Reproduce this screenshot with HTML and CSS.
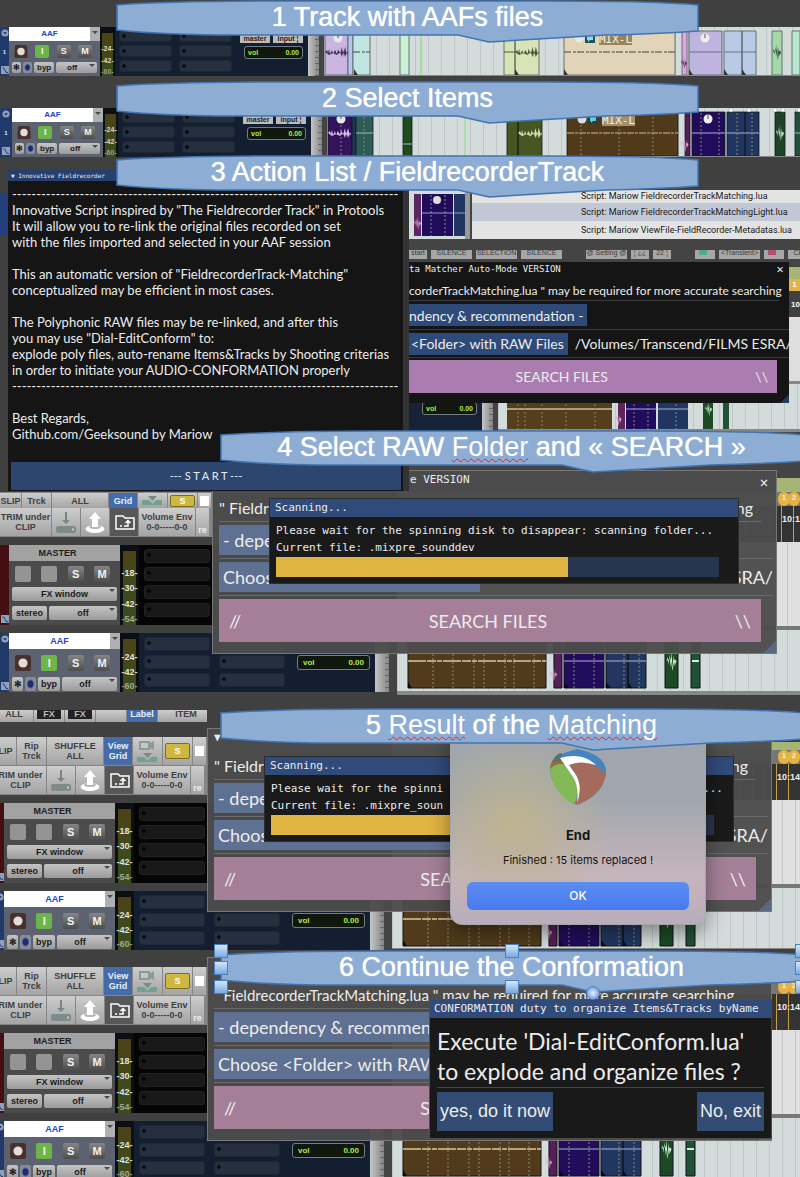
FILE: index.html
```html
<!DOCTYPE html>
<html lang="en">
<head>
<meta charset="utf-8">
<meta name="viewport" content="width=device-width, initial-scale=1">
<title>Fieldrecorder Track workflow</title>
<link rel="stylesheet" href="styles.css">
</head>
<body>
<svg class="defs" aria-hidden="true">
  <symbol id="callout" viewBox="0 0 583 43" preserveAspectRatio="none">
    <path d="M1 5Q55 1 160 1H430Q540 1 582 5V31Q540 34 490 35L373 42L342 35H120Q50 35 1 30Z" fill="#8dadd5" stroke="#4474b0" stroke-width="1.5"/>
  </symbol>
  <symbol id="rec" viewBox="0 0 14 14"><rect width="14" height="14" rx="2" fill="#49302d"/><circle cx="7" cy="7" r="4" fill="#e2dcda"/></symbol>
  <symbol id="chev" viewBox="0 0 10 10"><circle cx="5" cy="5" r="4.5" fill="#8fa0bd"/><path d="M2.500 4H7.500L5 7Z" fill="#1d3260"/></symbol>
  <symbol id="env" viewBox="0 0 9 9"><rect width="9" height="9" fill="#8fa0bd"/><path d="M1.500 2Q4 2 4.500 5T8 7.500" fill="none" stroke="#1d3260"/></symbol>
  <symbol id="wave" viewBox="0 0 24 16"><path d="M0 8L2 6L3 9L4 5L5 10L7 6L8 10L10 6L12 10L13 5L15 10L17 3L18 12L20 3L22 11L23 7V9L22 8L20 13L18 6L17 13L15 8L12 11L8 9L4 11Z"/></symbol>
  <symbol id="blob" viewBox="0 0 10 20"><path d="M0 10L1 6L2 14L3 3L4 17L5 0L6 18L7 4L8 15L10 10L8 8L6 20L4 7Z"/></symbol>
  <symbol id="clips-lg" viewBox="0 0 403 61">
    <g stroke="#10131a" stroke-width="1">
      <path d="M11 0H149V58H11Z" fill="#513b1b"/><path d="M157 0H165V58H157Z" fill="#55205a"/>
      <path d="M167 0H207V58H167Z" fill="#210d5c"/><path d="M209 0H231V58H209ZM231 0H249V58H231Z" fill="#213760"/>
      <path d="M268 0H281V58H268Z" fill="#1d4a24"/><path d="M294 0H303V58H294Z" fill="#215237"/>
    </g>
    <path d="M11 31H149" stroke="#d8c6a8" stroke-width="1.500" stroke-dasharray="18 1 9 1 5 1"/>
    <path d="M167 31H207M209 31H249" stroke="#a8b4dc"/>
    <path d="M11 52L15 58H11ZM167 52L172 58H167ZM209 52L214 58H209ZM231 52L235 58H231Z" fill="#0b0b12"/>
    <path d="M36 0V58M56 0V58M77 0V58M87 0V58M108 0V58M117 0V58M137 0V58M177 0V58M197 0V58M227 0V58M242 0V58" stroke="#8c8577" stroke-dasharray="2 2"/>
    <use href="#blob" x="269" y="21" width="11" height="20" fill="#d5f0d8"/>
    <use href="#blob" x="149" y="37" width="15" height="14" fill="#d9a8cc"/>
    <path d="M295 31H302" stroke="#d5f0d8" stroke-width="2"/>
  </symbol>
  <symbol id="ic-down" viewBox="0 0 28 28"><path d="M13 4H15V12H18L14 16L10 12H13Z" fill="#7d8584"/><rect x="4" y="18" width="20" height="7" rx="2" fill="#7f8b8b"/><path d="M20 21.500H22" stroke="#ccc" stroke-width="2"/></symbol>
  <symbol id="ic-up" viewBox="0 0 28 28"><ellipse cx="14" cy="21" rx="9.500" ry="4" fill="#fff"/><ellipse cx="14" cy="19" rx="6" ry="2" fill="#b8b8b8"/><path d="M14 4L20 11H17V19H11V11H8Z" fill="#fff"/></symbol>
  <symbol id="ic-folder" viewBox="0 0 28 28"><path d="M6 21V8H13L15 10H24V21Z" fill="#555" stroke="#fff" stroke-width="1.500"/><path d="M10 18H12M14 18H18V14M15.500 15L18 12.500L20.500 15" stroke="#fff" stroke-width="1.500" fill="none"/></symbol>
  <symbol id="ic-cam" viewBox="0 0 28 28"><path d="M6 4H17V6L21 4V13L17 11V13H6Z" fill="#8b9b97"/><path d="M8 6H15V11H8Z" fill="#c3c8c6"/><path d="M10 16H19L14.500 21Z" fill="#7b8a86"/><path d="M4 20H11L14.500 24L18 20H24V25H4Z" fill="#6fa28f"/></symbol>
</svg>

<main class="guide">
  <section class="step step-1">
    <h2 class="callout"><svg><use href="#callout"/></svg><span>1 Track with AAFs files</span></h2>
    <div class="track">
      <div class="rail"><svg><use href="#chev"/></svg><span>1</span><svg><use href="#env"/></svg></div>
      <div class="panel">
        <div class="name"><span>AAF</span><i class="drop"></i></div>
        <div class="keys"><button aria-label="Record"><svg><use href="#rec"/></svg></button><button class="on">I</button><button>S</button><button>M</button></div>
        <div class="opts"><button>✻</button><button class="pow" aria-label="Power"></button><button>byp</button><button class="wide">off<i class="drop"></i></button></div>
      </div>
      <div class="meter"><span>-24-</span><span>-42-</span><span>-60-</span></div>
      <div class="rack"><i></i><i></i><i></i></div><div class="rack"><i></i><i></i><i></i></div>
      <div class="send"><div class="route"><span>master</span><span>input ¦</span></div><div class="vol"><span>vol</span><span>0.00</span></div></div>
      <div class="ruler"></div>
      <div class="lane">
        <svg width="477" height="50" viewBox="0 0 477 50">
          <g stroke="#4c5560" stroke-width=".8"><path d="M1 4H24V48H1Z" fill="#ccb4e0"/><path d="M24 4H29V48H24Z" fill="#b6c6e6"/><path d="M29 4H46V48H29Z" fill="#c1e5e1"/><path d="M76 4H85V48H76Z" fill="#c9f2d2"/><path d="M180 4H191V48H180ZM191 4H215V48H191Z" fill="#d8e4b6"/><path d="M240 4H351V48H240Z" fill="#e2d4b9"/><path d="M358 4H363V48H358Z" fill="#dea9dc"/><path d="M365 4H398V48H365Z" fill="#bfb3e0"/><path d="M400 4H418V48H400ZM418 4H432V48H418Z" fill="#b9cae6"/><path d="M448 4H458V48H448Z" fill="#a3d9a8"/><path d="M468 4H476V48H468Z" fill="#b9e8d0"/></g>
          <path d="M97 4V50" stroke="#7be05c"/>
          <path d="M29 25H46M240 25H351" stroke="#444" stroke-dasharray="7 2 3 1"/><path d="M365 25H398M400 25H432" stroke="#68729a"/>
          <use href="#wave" x="1" y="17" width="24" height="16" fill="#3c3458"/><use href="#wave" x="191" y="16" width="25" height="18" fill="#4c5840"/><use href="#blob" x="448" y="17" width="10" height="16" fill="#2c3e33"/><use href="#blob" x="357" y="28" width="6" height="16" fill="#523250"/>
          <path d="M180 25H191" stroke="#4c5840"/>
          <path d="M240 42L244 48H240ZM191 42L195 48H191ZM365 42L369 48H365ZM400 42L404 48H400ZM418 42L422 48H418ZM30 42L34 48H30Z" fill="#333"/>
          <circle cx="14" cy="11" r="4.500" fill="#e8e8e8"/><circle cx="255" cy="11" r="4.500" fill="#e8e8e8"/><circle cx="381" cy="11" r="4.500" fill="#eee"/><path d="M14 7V11M381 7V11" stroke="#555"/>
          <rect x="261" y="6" width="10" height="10" fill="#21555e"/><path d="M263 8H269V13H266L264 15V13H263Z" fill="#8fe0e4"/>
          <rect x="275" y="5" width="33" height="13" fill="#9b8358"/><text class="clip-label" x="275" y="16">MIX-L</text>
        </svg>
      </div>
    </div>
  </section>

  <section class="step step-2">
    <h2 class="callout"><svg><use href="#callout"/></svg><span>2 Select Items</span></h2>
    <div class="track">
      <div class="rail"><svg><use href="#chev"/></svg><span>1</span><svg><use href="#env"/></svg></div>
      <div class="panel">
        <div class="name"><span>AAF</span><i class="drop"></i></div>
        <div class="keys"><button aria-label="Record"><svg><use href="#rec"/></svg></button><button class="on">I</button><button>S</button><button>M</button></div>
        <div class="opts"><button>✻</button><button class="pow" aria-label="Power"></button><button>byp</button><button class="wide">off<i class="drop"></i></button></div>
      </div>
      <div class="meter"><span>-24-</span><span>-42-</span><span>-60-</span></div>
      <div class="rack"><i></i><i></i><i></i></div><div class="rack"><i></i><i></i><i></i></div>
      <div class="send"><div class="route"><span>master</span><span>input ¦</span></div><div class="vol"><span>vol</span><span>0.00</span></div></div>
      <div class="ruler"></div>
      <div class="lane">
        <svg width="477" height="50" viewBox="0 0 477 50">
          <g stroke="#14161c" stroke-width=".8"><path d="M1 4H25V48H1Z" fill="#32135c"/><path d="M25 4H29V48H25Z" fill="#1f3560"/><path d="M29 4H46V48H29Z" fill="#2d5b55"/><path d="M76 4H85V48H76Z" fill="#1e4c1d"/><path d="M180 4H191V48H180ZM191 4H215V48H191Z" fill="#455620"/><path d="M240 4H351V48H240Z" fill="#513a1a"/><path d="M358 4H363V48H358Z" fill="#551c56"/><path d="M365 4H398V48H365Z" fill="#210c5c"/><path d="M400 4H418V48H400ZM418 4H432V48H418Z" fill="#203560"/><path d="M448 4H458V48H448Z" fill="#1d4426"/><path d="M468 4H476V48H468Z" fill="#205037"/></g>
          <path d="M138 4V50" stroke="#8fdf80"/>
          <path d="M240 25H351" stroke="#cdb898" stroke-dasharray="7 1 3 1"/><path d="M29 25H46M76 36H85M365 25H398M400 25H432M468 25H476" stroke="#aab4d0"/>
          <path d="M254 5V48M292 5V48M326 5V48M14 5V48M37 5V48M374 5V48M392 5V48M410 5V48M425 5V48" stroke="#8c8577" stroke-dasharray="2 2"/>
          <use href="#wave" x="1" y="17" width="24" height="16" fill="#dac4ef"/><use href="#wave" x="191" y="16" width="25" height="18" fill="#d3dcae"/><use href="#blob" x="448" y="17" width="10" height="16" fill="#cfeedd"/><use href="#blob" x="351" y="28" width="13" height="16" fill="#d5a6d5"/>
          <circle cx="14" cy="11" r="4.500" fill="#e8e8e8"/><circle cx="255" cy="11" r="4.500" fill="#ddd"/><circle cx="381" cy="11" r="4.500" fill="#eee"/><path d="M14 7V11M381 7V11" stroke="#555"/>
          <g fill="#fff" stroke="#999" stroke-width=".5"><circle cx="404" cy="2" r="2"/><circle cx="422" cy="2" r="2"/><circle cx="448" cy="2" r="2"/><circle cx="456" cy="2" r="2"/><circle cx="472" cy="2" r="2"/></g>
          <rect x="261" y="6" width="10" height="10" fill="#1b4750"/><path d="M263 8H269V13H266L264 15V13H263Z" fill="#66cfd5"/>
          <rect x="275" y="5" width="33" height="13" fill="#a58f66"/><text class="clip-label" x="275" y="16">MIX-L</text>
        </svg>
      </div>
    </div>
  </section>

  <section class="step step-3">
    <h2 class="callout"><svg><use href="#callout"/></svg><span>3 Action List / FieldrecorderTrack</span></h2>

    <div class="backdrop">
      <div class="actions">
        <svg width="61" height="49" viewBox="0 0 61 49"><rect width="61" height="49" fill="#d4dbdb"/><rect x="5" y="4" width="7" height="42" fill="#5a2560"/><rect x="13" y="4" width="31" height="42" fill="#210c5c"/><rect x="45" y="4" width="11" height="42" fill="#203560"/><rect x="56" width="5" height="49" fill="#999"/><path d="M13 23H44M45 23H56" stroke="#929cc8"/><path d="M22 5V46M36 5V46" stroke="#888" stroke-dasharray="2 2"/><circle cx="28" cy="10" r="4" fill="#ddd"/><use href="#blob" x="5" y="26" width="7" height="14" fill="#d9a8d9"/></svg>
        <ul class="list"><li>Script: Mariow FieldrecorderTrackMatching.lua</li><li>Script: Mariow FieldrecorderTrackMatchingLight.lua</li><li>Script: Mariow ViewFile-FieldRecorder-Metadatas.lua</li></ul>
      </div>
      <div class="minibar"><span>start</span><span>SILENCE</span><span>SELECTION</span><span>SILENCE</span><span class="gap">@ Setting @</span><span>¦ ¿¿</span><span>22 ¦</span><span class="gap"><i class="dot teal"></i></span><span>&lt;Transient&gt;</span><span><i class="dot rose"></i></span><span>CL</span></div>
      <div class="side"><b class="green"></b><b class="mark">1</b><span>10</span></div>
      <div class="peek"><div class="vol"><span>vol</span><span>0.00</span></div><div class="ruler"></div>
        <div class="lane"><svg width="302" height="48" viewBox="0 0 302 48"><rect x="9" width="105" height="48" fill="#553e1b"/><rect x="120" width="7" height="48" fill="#60245c"/><rect x="128" width="30" height="48" fill="#210c5c"/><rect x="160" width="30" height="48" fill="#203560"/><rect x="205" width="10" height="48" fill="#1d4a24"/><rect x="225" width="6" height="48" fill="#215237"/><path d="M9 25H114" stroke="#cfb9a0" stroke-width="1.500"/><path d="M128 25H158M160 25H190" stroke="#a5afd5"/><path d="M20 0V48M27 0V48M44 0V48M68 0V48M97 0V48M136 0V48M150 0V48M178 0V48" stroke="#8c8577" stroke-dasharray="2 2"/><use href="#blob" x="206" y="18" width="9" height="14" fill="#d5f0d8"/><use href="#blob" x="114" y="28" width="12" height="14" fill="#d9a8cc"/></svg></div>
      </div>
      <div class="cap"></div>
    </div>

    <article class="window matcher">
      <header><h3>ta Matcher Auto-Mode VERSION</h3><button class="close" aria-label="Close">✕</button></header>
      <p>corderTrackMatching.lua " may be required for more accurate searching</p>
      <div class="row"><button class="blue">ndency &amp; recommendation -</button></div>
      <div class="row"><button class="blue">&lt;Folder&gt; with RAW Files</button><span>/Volumes/Transcend/FILMS ESRA/</span></div>
      <button class="search"><span></span><span>SEARCH FILES</span><span>\\</span></button>
    </article>

    <article class="window intro">
      <header><h3>▼ Innovative Fieldrecorder</h3></header>
      <div class="copy">
        <p class="dash">--------------------------------------------------------------------------------</p>
        <p>Innovative Script inspired by "The Fieldrecorder Track" in Protools<br>It will allow you to re-link the original files recorded on set<br>with the files imported and selected in your AAF session</p>
        <p class="para">This an automatic version of "FieldrecorderTrack-Matching"<br>conceptualized may be efficient in most cases.</p>
        <p class="para">The Polyphonic RAW files may be re-linked, and after this<br>you may use "Dial-EditConform" to:<br>explode poly files, auto-rename Items&amp;Tracks by Shooting criterias<br>in order to initiate your AUDIO-CONFORMATION properly</p>
        <p class="dash">--------------------------------------------------------------------------------</p>
        <p class="para">Best Regards,<br>Github.com/Geeksound by Mariow</p>
      </div>
      <button class="start">--- S T A R T ---</button>
    </article>
  </section>

  <section class="step step-4">
    <h2 class="callout"><svg><use href="#callout"/></svg><span>4 Select RAW <u>Folder</u> and « SEARCH »</span></h2>
    <div class="session">
      <div class="mixer">
        <div class="bar cut"><button class="b1">SLIP</button><button class="b2">Trck</button><button class="b3">ALL</button><button class="b4 view">Grid</button><button class="b5" aria-label="Camera"><svg><use href="#ic-cam"/></svg></button><button class="b6"><b class="solo">S</b></button><button class="b7" aria-label="Item"><i class="sheet"></i></button></div>
        <div class="bar"><button class="c1">TRIM under<br>CLIP</button><button class="c2" aria-label="Import"><svg><use href="#ic-down"/></svg></button><button class="c2" aria-label="Export"><svg><use href="#ic-up"/></svg></button><button class="c2 dark" aria-label="Folder"><svg><use href="#ic-folder"/></svg></button><button class="c3">Volume Env<br>0-0-----0-0</button><button class="c4">re</button></div>
        <div class="track big master">
          <div class="rail"><span></span><span></span><svg><use href="#env"/></svg></div>
          <div class="panel"><div class="name"><span>MASTER</span></div>
            <div class="keys"><button aria-label="Slot 1"></button><button aria-label="Slot 2"></button><button>S</button><button>M</button></div>
            <div class="opts"><button class="wide">FX window<i class="drop"></i></button></div>
            <div class="opts"><button>stereo</button><button class="wide">off<i class="drop"></i></button></div></div>
          <div class="meter"><span>-18-</span><span>-30-</span><span>-42-</span><span>-54-</span></div>
          <div class="rack"><i></i><i></i><i></i><i></i></div>
        </div>
        <div class="track big">
          <div class="rail"><svg><use href="#chev"/></svg><span></span><svg><use href="#env"/></svg></div>
          <div class="panel"><div class="name"><span>AAF</span><i class="drop"></i></div>
            <div class="keys"><button aria-label="Record"><svg><use href="#rec"/></svg></button><button class="on">I</button><button>S</button><button>M</button></div>
            <div class="opts"><button>✻</button><button class="pow" aria-label="Power"></button><button>byp</button><button class="wide">off<i class="drop"></i></button></div></div>
          <div class="meter"><span>-24-</span><span>-42-</span><span>-60-</span></div>
          <div class="rack"><i></i><i></i><i></i></div><div class="rack"><i></i><i></i><i></i></div>
          <div class="send"><div class="vol"><span>vol</span><span>0.00</span></div></div>
          <div class="ruler"></div>
        </div>
      </div>
      <div class="arrange">
        <div class="marks"><b>1</b><b>2</b></div><div class="time">10:1</div>
        <div class="lane empty"></div><div class="lane"><svg width="403" height="61"><use href="#clips-lg"/></svg></div>
      </div>
    </div>
    <article class="window ghost">
      <header><h3>e VERSION</h3><button class="close" aria-label="Close">✕</button></header>
      <p><span>" Fieldr</span><span>ing</span></p>
      <div class="row"><button class="blue">- depe</button></div>
      <div class="row"><button class="blue">Choos</button><span>SRA/</span></div>
      <button class="search"><span>//</span><span>SEARCH FILES</span><span>\\</span></button>
    </article>
    <article class="window scan">
      <header><h3>Scanning...</h3></header>
      <p>Please wait for the spinning disk to disappear: scanning folder...<br>Current file: .mixpre_sounddev</p>
      <div class="progress"><i></i></div>
    </article>
  </section>

  <section class="step step-5">
    <h2 class="callout"><svg><use href="#callout"/></svg><span>5 <u>Result</u> of the <u>Matching</u></span></h2>
    <div class="session">
      <div class="mixer">
        <div class="bar sliver"><button class="d1">ALL</button><button class="d2"><b>FX</b></button><button class="d2"><b>FX</b></button><button class="d2" aria-label="Blank"></button><button class="d2 view">Label</button><button class="d3">ITEM</button></div>
        <div class="bar"><button class="b1">LIP</button><button class="b2">Rip<br>Trck</button><button class="b3">SHUFFLE<br>ALL</button><button class="b4 view">View<br>Grid</button><button class="b5" aria-label="Camera"><svg><use href="#ic-cam"/></svg></button><button class="b6"><b class="solo">S</b></button><button class="b7" aria-label="Item"><i class="sheet"></i></button></div>
        <div class="bar"><button class="c1">RIM under<br>CLIP</button><button class="c2" aria-label="Import"><svg><use href="#ic-down"/></svg></button><button class="c2" aria-label="Export"><svg><use href="#ic-up"/></svg></button><button class="c2 dark" aria-label="Folder"><svg><use href="#ic-folder"/></svg></button><button class="c3">Volume Env<br>0-0-----0-0</button><button class="c4">re</button></div>
        <div class="track big master">
          <div class="rail"><span></span><span></span><svg><use href="#env"/></svg></div>
          <div class="panel"><div class="name"><span>MASTER</span></div>
            <div class="keys"><button aria-label="Slot 1"></button><button aria-label="Slot 2"></button><button>S</button><button>M</button></div>
            <div class="opts"><button class="wide">FX window<i class="drop"></i></button></div>
            <div class="opts"><button>stereo</button><button class="wide">off<i class="drop"></i></button></div></div>
          <div class="meter"><span>-18-</span><span>-30-</span><span>-42-</span><span>-54-</span></div>
          <div class="rack"><i></i><i></i><i></i><i></i></div>
        </div>
        <div class="track big">
          <div class="rail"><svg><use href="#chev"/></svg><span></span><svg><use href="#env"/></svg></div>
          <div class="panel"><div class="name"><span>AAF</span><i class="drop"></i></div>
            <div class="keys"><button aria-label="Record"><svg><use href="#rec"/></svg></button><button class="on">I</button><button>S</button><button>M</button></div>
            <div class="opts"><button>✻</button><button class="pow" aria-label="Power"></button><button>byp</button><button class="wide">off<i class="drop"></i></button></div></div>
          <div class="meter"><span>-24-</span><span>-42-</span><span>-60-</span></div>
          <div class="rack"><i></i><i></i><i></i></div><div class="rack"><i></i><i></i><i></i></div>
          <div class="send"><div class="vol"><span>vol</span><span>0.00</span></div></div>
          <div class="ruler"></div>
        </div>
      </div>
      <div class="arrange">
        <div class="region"></div><div class="marks"><b>1</b><b>2</b></div><div class="time">10:14</div>
        <div class="lane empty"></div><div class="lane"><svg width="403" height="61"><use href="#clips-lg"/></svg></div>
      </div>
    </div>
    <article class="window ghost">
      <header><h3>▼</h3></header>
      <p><span>" Fieldr</span><span>ing</span></p>
      <div class="row"><button class="blue">- depe</button></div>
      <div class="row"><button class="blue">Choos</button><span>SRA/</span></div>
      <button class="search"><span>//</span><span class="part">SEA</span><span>\\</span></button>
    </article>
    <article class="window scan">
      <header><h3>Scanning...</h3></header>
      <p><span>Please wait for the spinni</span><span>...</span></p>
      <p>Current file: .mixpre_soun</p>
      <div class="progress"><i></i></div>
    </article>
    <article class="alert" role="dialog" aria-label="End">
      <svg width="58" height="64" viewBox="0 0 58 64">
        <path d="M1 22Q3 10 28 4Q54 9 57 24Q57 48 30 59Q24 61 18 54Q1 40 1 22Z" fill="#4585be"/>
        <path d="M1 22Q5 13 14 15L25 32Q31 42 26 59Q20 58 13 50Q1 38 1 22Z" fill="#83b957"/>
        <path d="M2 19Q6 10 11 12L16 20Q8 17 1 24Z" fill="#986b3e"/>
        <path d="M3 17Q7 8 13 8L12 16Z" fill="#5e6f70"/>
        <path d="M20 19Q41 12 57 29Q54 49 30 59Q28 61 26 58Q34 42 27 30Z" fill="#a46b5c"/>
        <path d="M11 13Q34 7 47 20Q31 15 20 20L27 30Q34 42 28 58Q30 41 24 32Z" fill="#fff"/>
      </svg>
      <h3>End</h3><p>Finished : 15 items replaced !</p><button>OK</button>
    </article>
  </section>

  <section class="step step-6">
    <h2 class="callout"><svg><use href="#callout"/></svg><span>6 Continue the Conformation</span>
      <i class="grip tl"></i><i class="grip ml"></i><i class="grip bl"></i><i class="grip tc"></i><i class="grip bc"></i><i class="grip tr"></i><i class="grip mr"></i><i class="grip br"></i><i class="grip knob"></i></h2>
    <div class="session">
      <div class="mixer">
        <div class="bar"><button class="b1">LIP</button><button class="b2">Rip<br>Trck</button><button class="b3">SHUFFLE<br>ALL</button><button class="b4 view">View<br>Grid</button><button class="b5" aria-label="Camera"><svg><use href="#ic-cam"/></svg></button><button class="b6"><b class="solo">S</b></button><button class="b7" aria-label="Item"><i class="sheet"></i></button></div>
        <div class="bar"><button class="c1">RIM under<br>CLIP</button><button class="c2" aria-label="Import"><svg><use href="#ic-down"/></svg></button><button class="c2" aria-label="Export"><svg><use href="#ic-up"/></svg></button><button class="c2 dark" aria-label="Folder"><svg><use href="#ic-folder"/></svg></button><button class="c3">Volume Env<br>0-0-----0-0</button><button class="c4">re</button></div>
        <div class="track big master">
          <div class="rail"><span></span><span></span><svg><use href="#env"/></svg></div>
          <div class="panel"><div class="name"><span>MASTER</span></div>
            <div class="keys"><button aria-label="Slot 1"></button><button aria-label="Slot 2"></button><button>S</button><button>M</button></div>
            <div class="opts"><button class="wide">FX window<i class="drop"></i></button></div>
            <div class="opts"><button>stereo</button><button class="wide">off<i class="drop"></i></button></div></div>
          <div class="meter"><span>-18-</span><span>-30-</span><span>-42-</span><span>-54-</span></div>
          <div class="rack"><i></i><i></i><i></i><i></i></div>
        </div>
        <div class="track big">
          <div class="rail"><svg><use href="#chev"/></svg><span></span><svg><use href="#env"/></svg></div>
          <div class="panel"><div class="name"><span>AAF</span><i class="drop"></i></div>
            <div class="keys"><button aria-label="Record"><svg><use href="#rec"/></svg></button><button class="on">I</button><button>S</button><button>M</button></div>
            <div class="opts"><button>✻</button><button class="pow" aria-label="Power"></button><button>byp</button><button class="wide">off<i class="drop"></i></button></div></div>
          <div class="meter"><span>-24-</span><span>-42-</span><span>-60-</span></div>
          <div class="rack"><i></i><i></i><i></i></div><div class="rack"><i></i><i></i><i></i></div>
          <div class="send"><div class="vol"><span>vol</span><span>0.00</span></div></div>
          <div class="ruler"></div>
        </div>
      </div>
      <div class="arrange">
        <div class="marks"><b>1</b><b>2</b></div><div class="time">10:14</div>
        <div class="lane empty"></div><div class="lane"><svg width="403" height="61"><use href="#clips-lg"/></svg></div>
      </div>
    </div>
    <article class="window ghost">
      <header></header>
      <p class="long">" FieldrecorderTrackMatching.lua " may be required for more accurate searching</p>
      <div class="row"><button class="blue">- dependency &amp; recommen</button></div>
      <div class="row"><button class="blue">Choose &lt;Folder&gt; with RAW</button></div>
      <button class="search"><span>//</span><span class="part">S</span><span></span></button>
    </article>
    <article class="window confirm">
      <header><h3>CONFORMATION duty to organize Items&amp;Tracks byName</h3></header>
      <p>Execute 'Dial-EditConform.lua'<br>to explode and organize files ?</p>
      <div class="choices"><button>yes, do it now</button><button>No, exit</button></div>
    </article>
  </section>
</main>
</body>
</html>
```
FILE: styles.css
```css
* { box-sizing: border-box; }
body { margin: 0; background: #404040; font-family: "Liberation Sans", Arial, sans-serif; }
h2, h3, p, ul { margin: 0; padding: 0; font-weight: normal; }
h3 { font-size: inherit; }
button { margin: 0; padding: 0; border: 0; font: inherit; color: inherit; white-space: nowrap; }
i { font-style: normal; }
.defs { display: block; width: 0; height: 0; }

.guide {
  --hand: Lato, "Open Sans", sans-serif;
  --mono: "DejaVu Sans Mono", "Liberation Mono", monospace;
  position: relative;
  overflow: hidden;
}
.step { position: relative; }

/* Callouts */
.callout {
  position: absolute;
  z-index: 5;
  left: 116px;
  width: 583px;
  height: 43px;
  color: #fff;
  font-size: 27px;
  line-height: 34px;
  text-align: center;
  text-shadow: 0 0 1px #fff;
}
.callout > svg { position: absolute; inset: 0; width: 100%; height: 100%; }
.callout span { position: relative; white-space: nowrap; }
.callout u { text-decoration: underline wavy #f01c20 1px; text-underline-offset: 2px; text-decoration-skip-ink: none; text-shadow: none; }
.step-1 .callout { top: 0; }
.step-2 .callout { top: 2px; }
.step-3 .callout { top: -3px; }
.step-4 .callout { top: -62px; left: 220px; }
.step-5 .callout { top: 2px; left: 220px; }
.step-6 .callout { top: 0; left: 220px; }

.grip { position: absolute; width: 14px; height: 14px; background: linear-gradient(#d4e7fb, #78aae4); border: 1px solid #4a7fc4; }
.tl, .tc, .tr { top: -6px; }
.ml, .mr { top: 11px; }
.bl, .bc, .br { top: 30px; }
.tl, .ml, .bl { left: -6px; }
.tc, .bc { left: 285px; }
.tr, .mr, .br { right: -6px; }
.knob { top: 36px; left: 366px; border-radius: 50%; background: radial-gradient(#e8f1ff, #4f83d8); }

/* Track rows */
.step-1 { padding: 27px 0 3px; }
.step-2 { padding: 29px 0 1px; }
.step-2 .rail { width: 12px; }
.track { display: flex; height: 49px; background: #141e31; font-size: 8px; font-weight: bold; }
.rail { display: flex; flex: none; flex-direction: column; justify-content: space-between; align-items: center; width: 9px; padding: 2px 0; background: #21396b; color: #dfe6f2; font-size: 6px; overflow: hidden; }
.rail svg { width: 8px; height: 8px; }
.panel { display: flex; flex: none; flex-direction: column; gap: 4px; width: 91px; background: #5c6270; color: #1b1b1b; }
.name { display: flex; height: 14px; line-height: 14px; background: #fff; color: #1d45dd; text-align: center; }
.name span { flex: 1; }
.name .drop { position: static; width: 10px; background: #aeb0b4; }
.drop::before { content: ""; display: block; width: 0; margin: 4px auto 0; border: 3px solid transparent; border-top-color: #4a4a4a; border-bottom: 0; }
.keys { display: flex; justify-content: space-between; padding: 0 8px 0 5px; }
.keys button { width: 14px; height: 13px; border-radius: 2px; background: linear-gradient(#858585, #4d4d4d); color: #f2f2f2; font-size: 9px; line-height: 13px; }
.keys svg { display: block; width: 100%; height: 100%; }
.keys .on { background: #6db44b; }
.opts { display: flex; gap: 2px; padding: 0 3px; }
.opts button { position: relative; min-width: 9px; height: 11px; padding: 0 3px; border-radius: 2px; background: linear-gradient(#c4c4c4, #9b9b9b); line-height: 10px; }
.opts button:first-child { padding: 0 1px; }
.opts .pow { background: radial-gradient(#1c2c78 30%, #888c98 50%); }
.opts .wide { flex: 1; padding-right: 12px; }
.opts .drop { position: absolute; top: -2px; right: 2px; }
.meter { display: flex; flex: none; flex-direction: column; justify-content: space-between; align-items: center; width: 15px; padding-top: 12px; background: linear-gradient(#4d4217, #3d4b1c 70%); border: solid #0b0f14; border-width: 6px 2px 0; color: #d6d6d2; font-size: 7px; line-height: 8px; white-space: nowrap; }
.meter span:last-child { opacity: .6; }
.rack { display: flex; flex: none; flex-direction: column; gap: 3px; width: 60px; padding: 3px 3px 0 4px; }
.rack i { height: 12px; border-radius: 3px; background: radial-gradient(circle at 4px 5px, #0a0f17 2px, #252f3e 2px); border: 1px solid #1d2633; }
.send { flex: 1; max-width: 73px; padding: 8px 5px 0 5px; }
.route { display: flex; gap: 3px; font-size: 7px; line-height: 7px; height: 8px; overflow: hidden; text-align: center; }
.route span { flex: 1; background: #bbb; color: #222; }
.vol { display: flex; justify-content: space-between; align-items: center; height: 13px; margin: 3px 0 0 4px; padding: 0 3px; border: 1px solid #727d84; border-radius: 3px; background: #10180e; color: #b3ea4c; font-size: 7px; font-weight: bold; }
.ruler { flex: none; width: 16px; border-right: 5px solid #444; background: repeating-linear-gradient(#666 0 1px, transparent 1px 6px) right / 4px 100% no-repeat, linear-gradient(90deg, #c6c6c6, #858585); }
.lane { flex: 1; overflow: hidden; background: repeating-linear-gradient(90deg, #bfc6c6 0 1px, transparent 1px 13px), #d4dbdb; border-bottom: 1px solid #888; }
.lane svg { display: block; }
.clip-label { font: 11px "DejaVu Sans Mono", monospace; fill: #f4efe2; }

/* Large session view */
.session { display: flex; }
.mixer { flex: none; width: 397px; }
.step-5 .mixer, .step-6 .mixer { margin-left: -5px; }
.big { width: 397px; height: 59px; margin-top: 8px; font-size: 9px; }
.big.master { height: 80px; background: #050505; }
.big .panel { width: 111px; gap: 6px; }
.big .name { height: 16px; line-height: 16px; }
.big .keys { padding: 0 10px 0 6px; }
.big .keys button { width: 16px; height: 16px; font-size: 11px; line-height: 16px; }
.big .opts button { height: 14px; min-width: 11px; line-height: 13px; }
.big .meter { width: 19px; border-width: 6px 3px 0; font-size: 9px; line-height: 12px; color: #e0e0dc; }
.big .rack { width: 75px; gap: 4px; padding: 4px 4px 0 5px; }
.big .rack i { height: 14px; }
.big .send { max-width: 86px; padding: 19px 5px 0 4px; }
.big .vol { height: 15px; padding: 0 5px; font-size: 8px; }
.big .ruler { width: 22px; border-right-width: 8px; }
.master .rail { background: #430f12; }
.master .panel { gap: 5px; background: #4b4b4b; }
.master .name { background: #a2a2a2; color: #1d1d1d; }
.master .name span { padding-right: 14px; }
.master .keys button:nth-child(-n+2) { background: #949494; }
.master .opts button { padding: 0 4px; }
.master .meter { padding-top: 16px; }
.master .rack i { background: radial-gradient(circle at 4px 5px, #050505 2px, #181818 2px); border-color: #222; }

.bar { display: flex; gap: 1px; width: 212px; height: 29px; overflow: hidden; background: #858585; font-size: 9px; font-weight: bold; line-height: 10px; color: #3f3f3f; }
.bar button { flex: none; height: 28px; background: linear-gradient(#cdcdcd, #a4a4a4); text-align: center; }
.bar svg { display: block; width: 28px; height: 28px; }
.bar .view { background: #456ca8; color: #e8efff; }
.bar .dark { background: #575757; }
.b1 { width: 21px; }
.b2, .b5 { width: 29px; }
.b3 { width: 56px; }
.b4 { width: 28px; }
.b6 { width: 29px; }
.b7, .c4 { width: 13px; overflow: hidden; }
.c1 { width: 51px; }
.c2 { width: 28px; }
.c3 { width: 56px; }
.bar .c4 { color: #eee; padding-top: 15px; }
.solo { display: block; margin: 0 2px; border: 1px solid #7c6c20; border-radius: 2px; background: #ceb840; color: #fff; line-height: 14px; }
.sheet { display: block; height: 10px; margin: 3px 2px; background: #fff; }
.cut { height: 16px; align-items: flex-end; }
.cut button { height: 15px; }
.cut svg { margin-top: -13px; }
.cut .solo { line-height: 10px; }
.sliver { height: 12px; margin: 4px 0 15px; }
.sliver button { height: 12px; line-height: 6px; padding-bottom: 5px; }
.sliver b { display: block; margin: 0 3px; background: #222; color: #bbb; line-height: 9px; }
.d1 { width: 38px; }
.d2 { width: 30px; }
.d3 { width: 56px; }

.arrange { display: flex; flex: 1; flex-direction: column; min-width: 0; color: #eee; }
.region { height: 8px; margin-top: 36px; background: #a5b573; }
.marks { display: flex; justify-content: flex-end; height: 14px; background: #777; font-size: 8px; line-height: 12px; }
.marks b { width: 12px; margin-right: -2px; border-radius: 6px; background: #e5b247; text-align: center; }
.marks b:last-child { margin-right: 0; }
.time { height: 36px; padding: 8px 0; background: repeating-linear-gradient(90deg, #c99b45 0 1px, transparent 1px 12px), #333; font-size: 9px; font-weight: bold; text-align: right; }
.arrange .lane { flex: none; height: 61px; }
.arrange .empty { height: 88px; background-color: #e0e0e0; border-bottom: 4px solid #777; }
.step-4 .lane:last-child { height: 65px; border-bottom: 4px solid #888; }
.step-4 .session { padding-bottom: 11px; }
.step-6 .session { padding-top: 17px; }
.step-6 .bar:first-child { margin: 0; }
.step-6 .marks { margin-top: 13px; }

/* Script windows */
.window { position: absolute; z-index: 2; background: #151515; color: #ececec; }
.window header { display: flex; justify-content: space-between; font-family: var(--mono); }
.close { background: none; }
.blue { padding: 0 4px; background: #2e4a79; text-align: left; }
.search { display: flex; justify-content: space-between; align-items: center; background: #ab7cb0; }

.step-3 { min-height: 334px; display: flex; }
.step-3::before { content: ""; align-self: flex-start; width: 8px; height: 43px; margin-top: 35px; background: #23407c; }
.intro { z-index: 4; top: 12px; left: 8px; width: 401px; border-right: 6px solid #333; font-size: 13px; line-height: 16px; font-family: var(--hand); white-space: nowrap; }
.intro header { height: 11px; padding-left: 3px; background: #25406f; font-size: 6px; line-height: 11px; }
.intro .copy { padding: 5px 4px 20px; }
.intro .para { margin-top: 16px; }
.start { display: block; width: 390px; height: 28px; margin: 0 3px 1px; background: #2d466f; font-size: 11px; }

.backdrop { flex: 1; margin: 32px 0 0 401px; min-width: 0; background: #444; }
.actions { display: flex; height: 49px; }
.list { flex: 1; list-style: none; overflow: hidden; background: #e3e3e3; color: #191919; font: 9px/18px Roboto, sans-serif; white-space: nowrap; margin-left: 2px; }
.list li { padding-left: 109px; }
.list li:first-child { line-height: 13px; }
.list li:nth-child(2) { background: #c2c7d6; }
.minibar { display: flex; gap: 4px; height: 9px; margin-top: 11px; overflow: hidden; color: #3c3c3c; font-size: 7px; line-height: 6px; text-align: center; white-space: nowrap; }
.minibar span { flex: none; min-width: 41px; background: #a6a6a6; }
.minibar .gap { margin-left: 20px; }
.minibar span:first-child, .minibar span:nth-child(6), .minibar span:nth-child(7) { min-width: 18px; }
.dot { display: block; width: 8px; height: 5px; margin-left: 4px; background: #52a88d; }
.dot.rose { background: #b25073; }
.minibar span:nth-child(8), .minibar span:nth-child(10), .minibar span:last-child { min-width: 20px; }
.side { display: flex; flex-direction: column; align-items: flex-end; height: 117px; margin-top: 8px; background: linear-gradient(#404040 50px, #dedede 50px 114px, #888 114px); color: #fff; font-size: 8px; }
.side b { width: 11px; height: 12px; line-height: 12px; }
.green, .cap { background: #a5b573; }
.mark { background: #e5b247; text-align: center; }
.side span { margin-top: 9px; font-weight: bold; }
.peek { display: flex; height: 48px; background: #172236; }
.peek .vol { width: 55px; margin: 18px 5px 0 13px; }
.peek .lane { border-bottom-width: 3px; }
.cap { height: 14px; margin: 46px 0 0 368px; }

.matcher { top: 104px; left: 409px; width: 380px; height: 141px; padding-right: 10px; font-family: var(--hand); font-size: 14px; white-space: nowrap; background: linear-gradient(135deg, transparent 50%, #263b60 50%) right bottom / 8px 8px no-repeat, #151515; }
.matcher header { height: 15px; margin-right: -8px; font-size: 9px; line-height: 15px; }
.matcher .close { width: 14px; font-size: 12px; }
.matcher p { height: 24px; font-size: 12px; line-height: 28px; border-bottom: 1px solid #3a3a3a; }
.matcher .row { display: flex; align-items: center; gap: 7px; height: 28px; border-bottom: 1px solid #3a3a3a; margin-right: -10px; }
.matcher .row:nth-of-type(1) { height: 29px; }
.matcher .blue { height: 22px; padding-left: 0; }
.matcher .row + .row .blue { padding-left: 2px; }
.matcher .search { width: 418px; height: 33px; margin: 2px 0 0 -50px; padding: 0 9px; }

.ghost { top: -22px; left: 212px; width: 565px; height: 184px; padding: 1px 15px 0 6px; border: 1px solid #777; background: linear-gradient(135deg, transparent 50%, #5a6882 50%) right bottom / 12px 12px no-repeat, rgb(76 76 76 / .96); font-family: var(--hand); font-size: 18px; white-space: nowrap; }
.step-5 .ghost { top: 22px; left: 207px; }
.step-6 .ghost { top: 7px; left: 207px; }
.ghost header { height: 20px; margin-right: -12px; font-size: 11px; line-height: 16px; }
.step-4 .ghost h3 { padding-left: 191px; }
.ghost .close { width: 18px; font-size: 14px; }
.ghost p { display: flex; justify-content: space-between; padding-right: 8px; height: 30px; font-size: 16px; line-height: 32px; border-bottom: 1px solid #6b6b6b; }
.ghost .long { font-size: 15px; }
.ghost .row { display: flex; align-items: center; justify-content: space-between; height: 37px; margin-right: -12px; border-bottom: 1px solid #6b6b6b; }
.ghost .blue { width: 261px; height: 30px; background: #5f7192; }
.ghost .search { width: 100%; height: 43px; margin-top: 3px; padding: 0 10px; background: #a47f97; }
.ghost .part { width: 120px; margin-right: auto; margin-left: 184px; text-align: left; }

.scan { top: 6px; left: 269px; width: 470px; height: 86px; padding-bottom: 6px; background: #1a1a1a; border: 1px solid #2d2d2d; font: 11px/17px var(--mono); white-space: nowrap; }
.step-5 .scan { top: 50px; left: 264px; }
.scan header, .confirm header { height: 18px; padding-left: 5px; background: #304a79; line-height: 17px; }
.scan header + p { padding-top: 5px; }
.scan p { display: block; padding: 0 10px 0 6px; }
.step-5 .scan p { display: flex; justify-content: space-between; }
.progress { height: 20px; margin: 1px 19px 0 6px; background: #27354f; }
.progress i { display: block; width: 66%; height: 100%; background: #dfb440; }

.alert { position: absolute; z-index: 3; top: 20px; left: 450px; width: 256px; padding: 18px 16px 14px; border: 1px solid #a5a5a5; border-radius: 12px; background: radial-gradient(circle at 25% 50%, #bfb48f, transparent 45%), linear-gradient(#9fa6ad 35%, #c6b5bc 75%, #b9adbc); box-shadow: 0 8px 20px rgb(0 0 0 / .4); color: #141414; font: 11px/16px Inter, sans-serif; text-align: center; }
.alert svg { display: block; margin: 0 auto; }
.alert h3 { margin-top: 17px; font-size: 13px; font-weight: bold; line-height: 18px; }
.alert p { margin: 8px 0 14px; }
.alert button { width: 100%; height: 28px; border-radius: 6px; background: linear-gradient(#5c8df2, #477aee); color: #fff; font-size: 12px; font-weight: 500; }

.confirm { z-index: 3; top: 49px; left: 429px; width: 343px; height: 140px; border: 1px solid #4c4c4c; background: #191919; font-size: 23px; font-family: var(--hand); white-space: nowrap; }
.confirm header { padding-left: 4px; font-size: 11px; }
.confirm p { margin: 8px 7px 0; height: 62px; border-bottom: 1px solid #444; line-height: 30px; }
.choices { display: flex; justify-content: space-between; margin: 4px 7px; font: 18px "Liberation Sans", sans-serif; }
.choices button { height: 39px; padding: 0 3px; background: #334c74; }
```
